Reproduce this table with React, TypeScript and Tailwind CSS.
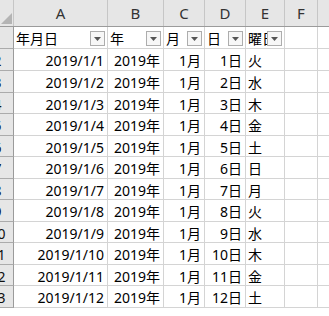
import React from 'react';

const WEEK = ['火', '水', '木', '金', '土', '日', '月'];

const rows = Array.from({ length: 12 }, (_, i) => ({
  date: `2019/1/${i + 1}`,
  year: '2019年',
  month: '1月',
  day: `${i + 1}日`,
  dow: WEEK[i % 7],
}));

// alternating heights to follow the screenshot's 21.5px pitch
const rowHeights = ['h-[22px]', 'h-[22px]', 'h-[21px]', 'h-[22px]', 'h-[21px]', 'h-[22px]', 'h-[21px]', 'h-[22px]', 'h-[21px]', 'h-[22px]', 'h-[21px]', 'h-[22px]'];

const colWidths = ['w-[94px]', 'w-[56px]', 'w-[41px]', 'w-[41px]', 'w-[39px]', 'w-[33px]'];
const colNames = ['A', 'B', 'C', 'D', 'E', 'F'];

function FilterButton() {
  return (
    <div className="mr-[2px] mt-[2px] flex h-[15px] w-[15px] shrink-0 items-center justify-center border border-[#adadad] bg-[#f7f7f7]">
      <svg width="7" height="4" viewBox="0 0 7 4">
        <path d="M0 0 L7 0 L3.5 4 Z" fill="#555" />
      </svg>
    </div>
  );
}

// row numbers: the sheet is scrolled so only the right part of this column shows
function RowHeader({ n, h }: { n: number; h: string }) {
  return (
    <div
      className={`${h} -ml-[18px] flex w-[32px] shrink-0 items-center justify-center border-r border-b border-r-[#9b9b9b] border-b-[#ababab] bg-[#e6e6e6] pt-[2px] text-[14px] text-[#111]`}
    >
      {n}
    </div>
  );
}

function Cell({ w, children, right = true }: { w: string; children?: React.ReactNode; right?: boolean }) {
  return (
    <div
      className={`${w} flex shrink-0 items-center overflow-hidden whitespace-nowrap border-r border-b border-[#d4d4d4] pt-[2px] ${right ? 'justify-end pr-[3px]' : 'pl-[2px]'}`}
    >
      {children}
    </div>
  );
}

function HeadCell({ w, label }: { w: string; label: string }) {
  return (
    <div className={`${w} flex shrink-0 items-center border-r border-b border-[#d4d4d4]`}>
      <span className="min-w-0 flex-1 overflow-hidden whitespace-nowrap pl-[2px] pt-[1px]">{label}</span>
      <FilterButton />
    </div>
  );
}

export default function App() {
  return (
    <div
      className="h-[316px] w-[329px] overflow-hidden bg-white text-[14px] text-black"
      style={{ fontFamily: '"Noto Sans", "Noto Sans CJK JP", sans-serif' }}
    >
      {/* column letters */}
      <div className="flex h-[27px] border-b border-[#9b9b9b] bg-[#e6e6e6]">
        <div className="flex w-[14px] shrink-0 items-end justify-end border-r border-[#c6c6c6] pb-[2px] pr-[1px]">
          <svg width="11" height="11" viewBox="0 0 11 11">
            <path d="M11 0 L11 11 L0 11 Z" fill="#b4b4b4" />
          </svg>
        </div>
        {colNames.map((c, i) => (
          <div
            key={c}
            className={`${colWidths[i]} flex shrink-0 items-center justify-center border-r border-[#c6c6c6] pt-[1px] text-[15px] text-[#333]`}
          >
            {c}
          </div>
        ))}
        <div className="flex-1" />
      </div>

      {/* table header row */}
      <div className="flex h-[22px]">
        <RowHeader n={1} h="h-[22px]" />
        <HeadCell w={colWidths[0]} label="年月日" />
        <HeadCell w={colWidths[1]} label="年" />
        <HeadCell w={colWidths[2]} label="月" />
        <HeadCell w={colWidths[3]} label="日" />
        <HeadCell w={colWidths[4]} label="曜日" />
        <Cell w={colWidths[5]} />
        <div className="flex-1 border-b border-[#d4d4d4]" />
      </div>

      {rows.map((r, i) => (
        <div key={r.date} className={`flex ${rowHeights[i]}`}>
          <RowHeader n={i + 2} h={rowHeights[i]} />
          <Cell w={colWidths[0]}>{r.date}</Cell>
          <Cell w={colWidths[1]}>{r.year}</Cell>
          <Cell w={colWidths[2]}>{r.month}</Cell>
          <Cell w={colWidths[3]}>{r.day}</Cell>
          <Cell w={colWidths[4]} right={false}>{r.dow}</Cell>
          <Cell w={colWidths[5]} />
          <div className="flex-1 border-b border-[#d4d4d4]" />
        </div>
      ))}
    </div>
  );
}
